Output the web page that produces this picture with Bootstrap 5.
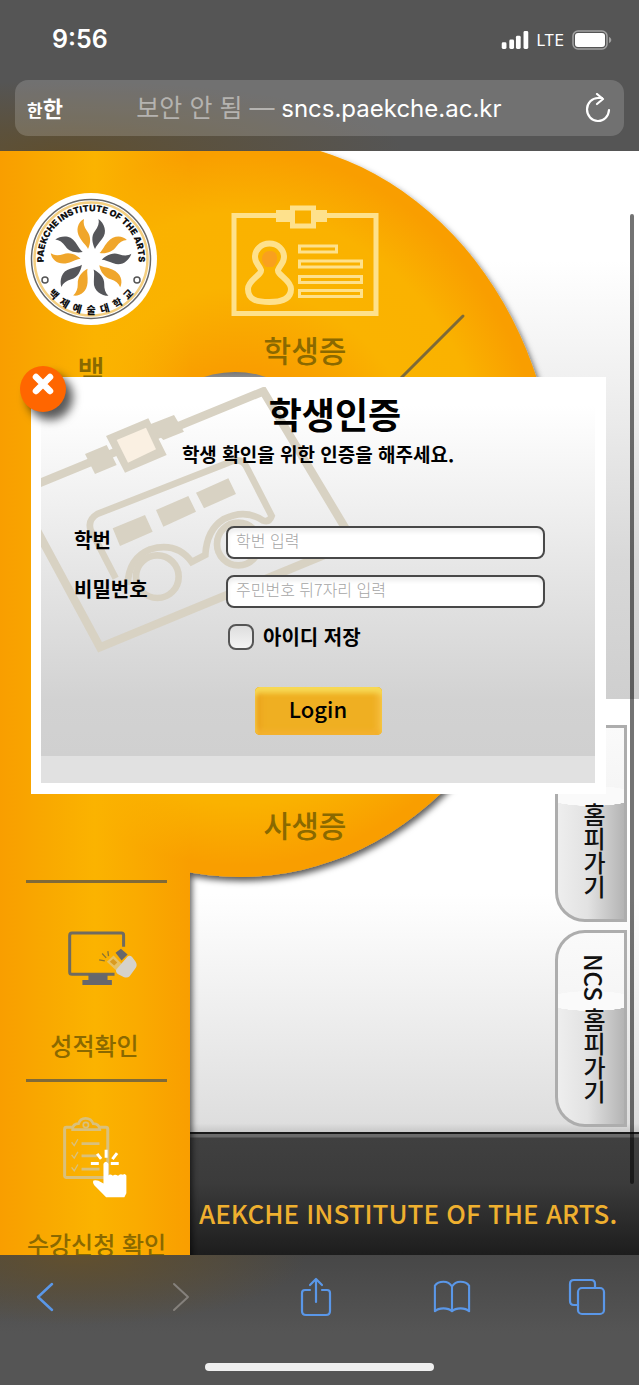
<!DOCTYPE html>
<html lang="ko">
<head>
<meta charset="utf-8">
<meta name="viewport" content="width=device-width, initial-scale=1">
<title>백제예술대학교 학생인증</title>
<link href="https://cdn.jsdelivr.net/npm/bootstrap@5.3.0/dist/css/bootstrap.min.css" rel="stylesheet">
<style>
  body { font-family: "Noto Sans CJK KR", sans-serif; color: #000; background: #555; }
  .latin { font-family: Inter, "Noto Sans CJK KR", sans-serif; }

  /* browser chrome */
  .browser-top { height: 151px; padding: 0 15px; color: #fff;
    background: radial-gradient(ellipse 340px 70px at 10% 100%, #5f4f30, rgba(85,85,85,0)), #555; }
  .status-line { height: 80px; padding: 0 12px 0 37px; }
  .clock { font-size: 25px; font-weight: 600; }
  .network { font-size: 16px; }
  .address { height: 56px; border-radius: 13px; padding: 0 12px; background: rgba(255,255,255,.17); }
  .address-text { font-size: 24px; color: #fff; padding: 2px 9px 0 0; }
  .address-text span { font-size: 25px; color: #b5b3b0; }
  .reader-small { font-size: 17px; }
  .reader-large { font-size: 22px; }
  .plain-btn { border: 0; padding: 0; background: none; color: inherit; line-height: 0; }
  .browser-bottom { height: 130px; color: #5a97e8;
    background: radial-gradient(ellipse 230px 70px at 12% 0, #62502e, rgba(85,85,85,0)), linear-gradient(#474747, #555 60%); }
  .tool-row { height: 83px; padding: 0 32px 0 25px; }
  .tool-row .plain-btn { width: 40px; }
  .home-bar { width: 229px; height: 8px; border-radius: 4px; background: #efefef; margin-top: 25px; }

  /* campus page */
  .stage { min-height: 0; background: #fff; }
  .art { left: 0; top: 0; z-index: 1; pointer-events: none; }
  .side-menu { width: 190px; z-index: 2; padding-top: 42px; }
  .side-list { top: 729px; }
  .menu-link { color: #8a6900; text-decoration: none; font-weight: 500; }
  .big-label { font-size: 30px; line-height: 40px; }
  .side-item { height: 199px; margin: 0 23px 0 26px; border-top: 3px solid #806a38; font-size: 24px; line-height: 32px; white-space: nowrap; }
  .side-icon { height: 146px; padding-top: 4px; }
  .page-main { min-width: 0; }
  .panel-upper { height: 548px; padding: 54px 0 0 41px; background: linear-gradient(#fff 20%, #f0f0f0 42%, #d8d8d8 75%, #cfcfcf); }
  .panel-lower { padding: 26px 12px 5px 41px; background: linear-gradient(#fff 45%, #dedede 98%, #c8c8c8); }
  .above-art { position: relative; z-index: 2; }
  .card-item { width: 148px; }
  .card-item .big-label { margin-top: 12px; }
  .dorm-item { padding-top: 79px; }
  .band { height: 125px; border-top: 2px solid #191919; background: linear-gradient(#6a6a6a 0, #6a6a6a 3px, #404040 4px, #3b3b3b 40%, #1c1c1c); }
  .band-text { font-weight: 500; font-size: 26px; line-height: 40px; color: #efb02f; white-space: nowrap; padding: 59px 0 0 9px; }
  .side-tab { width: 72px; height: 197px; border: 3px solid #adadad; border-radius: 30px 0 0 30px;
    writing-mode: vertical-rl; font-size: 24px; font-weight: 500; line-height: 32px; color: #111; text-decoration: none; padding-left: 6px;
    background: radial-gradient(ellipse 46px 10px at 50% 68px, #fafafa 98%, rgba(250,250,250,0)) no-repeat,
      linear-gradient(#fafafa, #f5f5f5) 0 0 / 100% 68px no-repeat, linear-gradient(90deg, #eee, #e2e2e2 45%, #b4b4b4); }
  .scroll-thumb { right: 5px; top: 63px; width: 4px; height: 970px; border-radius: 2px; background: rgba(0,0,0,.55); z-index: 5; }

  /* login dialog */
  .login-box { top: 226px; left: 31px; right: 33px; z-index: 4; border: 10px solid #fff; border-right-width: 11px; border-bottom-width: 11px; }
  .login-body { height: 369px; background: linear-gradient(#fff 5%, #d2d2d2 85%, #d0d0d0); }
  .login-foot { height: 27px; background: #e1e1e1; }
  .watermark { left: 0; top: 0; }
  .login-title { font-size: 36px; font-weight: 700; line-height: 52px; margin: 0 0 0 34px; }
  .login-sub { font-size: 19px; font-weight: 700; line-height: 30px; }
  .login-form { margin-top: 57px; padding: 0 50px 0 33px; }
  .field-label { width: 152px; font-size: 20px; font-weight: 700; line-height: 28px; }
  .field-input { min-width: 0; height: 33px; border: 2px solid #484848; border-radius: 8px; background: #fff; padding: 0 8px 6px;
    font-size: 16px; box-shadow: inset 0 4px 4px #eee; }
  .field-input::placeholder { color: #a5a5a5; font-weight: 300; opacity: 1; }
  .save-row { margin: 15px 0 0 154px; gap: 9px; }
  .save-check { appearance: none; width: 26px; height: 26px; border: 2px solid #555; border-radius: 8px; background: linear-gradient(#dedede, #f4f4f4); margin: 0; }
  .save-label { font-size: 20px; font-weight: 700; line-height: 28px; }
  .login-btn { width: 127px; height: 48px; margin-top: 36px; border: 0; border-radius: 5px; background: #efaf22; font-size: 22px; font-weight: 500; color: #000;
    padding: 0 0 6px; box-shadow: inset 0 6px 5px #f7d955, inset 0 -5px 5px #f3b12e, inset 6px 0 5px #eba31f, inset -6px 0 5px #f3b838; }
  .close-btn { top: -21px; left: -21px; width: 46px; height: 46px; border: 0; border-radius: 50%; background: #ff6600; padding: 0 0 11px;
    line-height: 0; box-shadow: 7px 8px 10px rgba(0,0,0,.65); z-index: 3; }
</style>
</head>
<body>
<div class="d-flex flex-column vh-100 overflow-hidden">

  <header class="browser-top flex-shrink-0">
    <div class="status-line d-flex align-items-center justify-content-between latin">
      <span class="clock">9:56</span>
      <div class="d-flex align-items-center gap-2">
        <svg width="28" height="18" viewBox="0 0 28 19" fill="#fff"><rect y="12" width="5" height="7" rx="1.5"/><rect x="8" y="9" width="5" height="10" rx="1.5"/><rect x="15" y="5" width="5" height="14" rx="1.5"/><rect x="23" y="0" width="5" height="19" rx="1.5"/></svg>
        <span class="network">LTE</span>
        <svg width="40" height="20" viewBox="0 0 40 20"><rect x="1" y="1" width="34" height="18" rx="5" fill="none" stroke="#a2a2a2" stroke-width="1.5"/><rect x="3" y="3" width="30" height="14" rx="3" fill="#fff"/><path d="M37 7c3 1 3 5 0 6z" fill="#a2a2a2"/></svg>
      </div>
    </div>
    <div class="address d-flex align-items-center justify-content-between">
      <button class="plain-btn fw-bold" aria-label="보기 설정"><span class="reader-small">한</span><span class="reader-large">한</span></button>
      <div class="address-text latin"><span>보안 안 됨 —</span> sncs.paekche.ac.kr</div>
      <button class="plain-btn" aria-label="새로고침">
        <svg width="28" height="30" viewBox="0 0 28 30" fill="none" stroke="#fff" stroke-width="2.2" stroke-linecap="round" stroke-linejoin="round"><path d="M25 17a11 11.500 0 1 1-11-12h4"/><path d="M13 1l6 5-6 5"/></svg>
      </button>
    </div>
  </header>

  <main class="stage position-relative d-flex flex-grow-1 overflow-hidden">
    <svg class="art position-absolute" width="600" height="1110" viewBox="0 151 600 1110" aria-hidden="true">
      <defs>
        <linearGradient id="strip" x1="0" x2="1" y1="0" y2="0"><stop offset="0" stop-color="#f99e00"/><stop offset=".25" stop-color="#f9a900"/><stop offset=".5" stop-color="#fbb300"/><stop offset=".72" stop-color="#faab00"/><stop offset="1" stop-color="#f99e00"/></linearGradient>
        <linearGradient id="stripFade" x1="0" x2="1" y1="0" y2="0"><stop offset="0" stop-color="#f99e00"/><stop offset=".25" stop-color="#f9a900"/><stop offset=".5" stop-color="#fbb300"/><stop offset="1" stop-color="#fab200" stop-opacity="0"/></linearGradient>
        <radialGradient id="ring"><stop offset=".38" stop-color="#f99e00"/><stop offset=".6" stop-color="#fab300"/><stop offset=".8" stop-color="#fab200"/><stop offset=".97" stop-color="#f99e00"/></radialGradient>
        <linearGradient id="hub" x1="0" x2="0" y1="0" y2="1"><stop offset="0" stop-color="#777"/><stop offset=".06" stop-color="#bbb"/></linearGradient>
        <filter id="cast" x="-10%" y="-10%" width="125%" height="125%"><feDropShadow dx="2" dy="4" stdDeviation="3" flood-color="#000" flood-opacity=".65"/></filter>
      </defs>
      <g filter="url(#cast)">
        <rect x="-20" y="130" width="210" height="1160" fill="#f99e00"/>
        <ellipse cx="240" cy="508" rx="317" ry="369" fill="url(#ring)"/>
      </g>
      <rect y="870" width="190" height="400" fill="url(#strip)"/>
      <rect y="140" width="190" height="730" fill="url(#stripFade)"/>
      <ellipse cx="235" cy="507" rx="115" ry="135" fill="url(#hub)"/>
      <path d="M463 316 395 384" stroke="#7d6a38" stroke-width="3" stroke-linecap="round"/>
    </svg>

    <nav class="side-menu position-relative flex-shrink-0" aria-label="메뉴">
      <a href="#" class="menu-link d-block text-center pe-2">
        <svg width="132" height="132" viewBox="-66 -66 132 132">
          <defs>
            <path id="sealTop" d="M-46.500 9A47.400 47.400 0 1 1 46.500 9"/>
            <path id="sealLow" d="M-44 33A55 55 0 0 0 44 33"/>
            <path id="leafDark" d="M7.500-40C13-36 17-27 11-20C8-16 5-13 4-10C1-16 0-23 4-28C7-32 8.500-36 7.500-40Z" fill="#55565a"/>
            <path id="leafGold" d="M-7-40C-13-37-16-29-11-21C-8-16-4-13-3-10C0-16 0-23-4-28C-7-32-8-36-7-40Z" fill="#f0a62b"/>
          </defs>
          <circle r="66" fill="#fff"/>
          <circle r="59.500" fill="none" stroke="#686868" stroke-width="1.500"/>
          <circle r="56.500" fill="none" stroke="#f4cf80" stroke-width="2.500"/>
          <g><use href="#leafDark"/><use href="#leafDark" transform="rotate(72)"/><use href="#leafDark" transform="rotate(144)"/><use href="#leafDark" transform="rotate(216)"/><use href="#leafDark" transform="rotate(288)"/></g>
          <g><use href="#leafGold"/><use href="#leafGold" transform="rotate(72)"/><use href="#leafGold" transform="rotate(144)"/><use href="#leafGold" transform="rotate(216)"/><use href="#leafGold" transform="rotate(288)"/></g>
          <circle cx="-46" cy="21" r="3" fill="none" stroke="#555" stroke-width="1.500"/><circle cx="46" cy="21" r="3" fill="none" stroke="#555" stroke-width="1.500"/>
          <text font-family="Inter, sans-serif" font-weight="900" font-size="9" fill="#111" text-anchor="middle"><textPath href="#sealTop" startOffset="50%">PAEKCHE INSTITUTE OF THE ARTS</textPath></text>
          <text font-weight="900" font-size="10" fill="#111" text-anchor="middle"><textPath href="#sealLow" startOffset="50%">백 &#160;제 &#160;예 &#160;술 &#160;대 &#160;학 &#160;교</textPath></text>
        </svg>
        <span class="d-block big-label mt-4">백</span>
      </a>
      <div class="side-list position-absolute start-0 end-0">
        <a href="#" class="menu-link side-item d-flex flex-column align-items-center">
          <span class="side-icon d-flex align-items-center ps-2">
            <svg class="ms-1" width="72" height="57" viewBox="200 95 215 170">
              <path d="M369 145V110Q369 104 363 104H215Q208 104 208 112V220Q208 227 215 227H342" fill="none" stroke="#6f6b60" stroke-width="9"/>
              <path d="M264 228h57v16h13v15h-88v-15h18z" fill="#66676c"/>
              <g stroke="#8b7430" stroke-width="4"><path d="M296 184l17 3M305 165l12 13M322 158l2 15"/></g>
              <path d="M345 163l16-12 20 17-18 18z" fill="#66676c"/>
              <path d="M319 190l20-19 24 25-17 19z" fill="#e6c164"/><path d="M328 190l10-9 12 11-9 9z" fill="#d99b20"/>
              <path d="M347 213l34-39q7-5 14 2l10 14q6 10 0 18l-18 25q-7 6-18 2l-16-8q-9-6-6-14z" fill="#d5d2cb"/>
            </svg>
          </span>
          <span class="pe-1">성적확인</span>
        </a>
        <a href="#" class="menu-link side-item d-flex flex-column align-items-center">
          <span class="side-icon d-flex align-items-center pe-1">
            <svg width="67" height="83" viewBox="185 648 200 250">
              <rect x="195" y="682" width="130" height="151" rx="6" fill="none" stroke="#d9c07c" stroke-width="9"/>
              <path d="M219 689q0-18 18-18 5-16 21-16 17 0 23 16 18 0 20 18z" fill="#f6ac05" stroke="#d9c07c" stroke-width="8"/><circle cx="259" cy="675" r="8" fill="none" stroke="#d9c07c" stroke-width="5"/>
              <path d="M216 727l8 10 11-19M216 765l8 10 11-19M216 803l8 10 11-19" fill="none" stroke="#d9c07c" stroke-width="4"/>
              <path d="M246 731h54M246 768h46M246 808h54" stroke="#d9c07c" stroke-width="8"/>
              <path d="M320 750v24M293 762l12 15M353 760l-14 18M274 791h24M334 791h24" stroke="#fff" stroke-width="9"/>
              <path d="M312 792q7-12 15 0v35q4-6 13 0v2q5-8 16-1 6-8 15-3 5-6 10 2v54l-6 12h-55l-35-36q-7-9-3-15 8-2 15 1l15 8z" fill="#fff"/>
            </svg>
          </span>
          <span>수강신청 확인</span>
        </a>
      </div>
    </nav>

    <section class="page-main d-flex flex-column flex-grow-1">
      <div class="panel-upper flex-shrink-0">
        <a href="#" class="menu-link above-art card-item d-block text-center">
          <svg class="d-block" width="148" height="112" viewBox="0 0 148 112" fill="none" stroke="#fee18c">
            <rect x="3" y="10.500" width="142" height="98" stroke-width="5"/>
            <path d="M45 5h51v12H45z" fill="#fee18c" stroke="none"/>
            <rect x="61.500" y="3" width="21" height="18" fill="#f9b000" stroke-width="5"/>
            <path d="M38.500 38.500C30 38.500 24 45 24 52C24 58 28 60 30 65C31 70 17 75 17 84C17 95 26 97 38.500 97C51 97 60 94 60 84C60 75 46 70 47 65C49 60 53 58 53 52C53 45 47 38.500 38.500 38.500Z" stroke-width="6"/>
            <path d="M31 53q1-7 8-7t7 7q0 6-4 9h-7q-4-3-4-9z" fill="#f9a01e" stroke="none"/>
            <path d="M68.500 41h37v6h-37zM68.500 56h62v6h-62zM68.500 71.500h62v6h-62zM68.500 85.500h62v6h-62z" stroke-width="3"/>
          </svg>
          <span class="d-block big-label">학생증</span>
        </a>
      </div>
      <div class="panel-lower d-flex flex-grow-1 justify-content-between">
        <a href="#" class="menu-link above-art card-item dorm-item big-label text-center">사생증</a>
        <div class="d-flex flex-column gap-2 above-art">
          <a href="#" class="side-tab d-flex align-items-center justify-content-center">학교 홈피가기</a>
          <a href="#" class="side-tab d-flex align-items-center justify-content-center">NCS 홈피가기</a>
        </div>
      </div>
      <footer class="band flex-shrink-0"><div class="band-text">AEKCHE INSTITUTE OF THE ARTS.</div></footer>
    </section>

    <div class="login-box position-absolute" role="dialog" aria-labelledby="loginTitle">
      <button class="close-btn position-absolute" aria-label="닫기">
        <svg width="24" height="24" viewBox="0 0 24 24" stroke="#fff" stroke-width="6.500" stroke-linecap="round"><path d="M5 5l14 14M19 5L5 19"/></svg>
      </button>
      <div class="login-body position-relative">
        <svg class="watermark position-absolute" width="320" height="280" viewBox="123 81 960 840" fill="none" stroke="#d8d2c3" stroke-width="25" aria-hidden="true">
          <path d="M110 373L790 94 1062 548 300 862 110 510"/>
          <path d="M318 228l127-53 55 110-125 53zM255 282l65-27 30 60-65 27zM445 195l77-30 30 50-62 25z" fill="#d8d2c3" stroke="none"/>
          <path d="M350 240l88-37 30 65-84 40z" fill="#faf0e2" stroke="none"/>
          <path d="M347 655L272 510Q262 480 292 462L695 304Q725 294 738 318L815 468Q808 488 790 482Q735 445 670 478Q620 510 616 585L575 606Q530 545 450 568Q385 595 383 675" stroke-width="20"/>
          <path d="M338 505l97-40 23 50-98 43zM468 450l97-42 23 47-98 45zM588 398l97-43 23 47-96 43z" fill="#d8d2c3" stroke="none"/>
          <circle cx="472" cy="650" r="64" stroke-width="20"/><circle cx="715" cy="552" r="64" stroke-width="20"/>
        </svg>
        <div class="position-relative">
          <h1 class="login-title text-center" id="loginTitle">학생인증</h1>
          <p class="login-sub text-center mb-0">학생 확인을 위한 인증을 해주세요.</p>
          <form class="login-form" id="loginForm">
            <div class="d-flex mb-3">
              <label class="field-label flex-shrink-0" for="studentNo">학번</label>
              <input class="field-input flex-grow-1" id="studentNo" type="text" placeholder="학번 입력">
            </div>
            <div class="d-flex">
              <label class="field-label flex-shrink-0" for="pin">비밀번호</label>
              <input class="field-input flex-grow-1" id="pin" type="password" placeholder="주민번호 뒤7자리 입력">
            </div>
            <div class="save-row d-flex align-items-center">
              <input class="save-check" id="saveId" type="checkbox">
              <label class="save-label" for="saveId">아이디 저장</label>
            </div>
          </form>
          <div class="text-center"><button class="login-btn" type="submit" form="loginForm">Login</button></div>
        </div>
      </div>
      <div class="login-foot"></div>
    </div>
    <div class="scroll-thumb position-absolute"></div>
  </main>

  <footer class="browser-bottom flex-shrink-0">
    <div class="tool-row d-flex align-items-center justify-content-between">
      <button class="plain-btn" aria-label="뒤로"><svg width="26" height="32" viewBox="0 0 26 32" fill="none" stroke="currentColor" stroke-width="2.500" stroke-linecap="round" stroke-linejoin="round"><path d="M20 3L6 16l14 13"/></svg></button>
      <button class="plain-btn" aria-label="앞으로"><svg width="26" height="32" viewBox="0 0 26 32" fill="none" stroke="#85817c" stroke-width="2" stroke-linecap="round" stroke-linejoin="round"><path d="M6 3l14 13L6 29"/></svg></button>
      <button class="plain-btn" aria-label="공유"><svg width="32" height="40" viewBox="0 0 32 40" fill="none" stroke="currentColor" stroke-width="2.200" stroke-linecap="round" stroke-linejoin="round"><path d="M10 13H5q-3 0-3 3v18q0 4 4 4h20q4 0 4-4V16q0-3-3-3h-5M16 25V2M10 8l6-6 6 6"/></svg></button>
      <button class="plain-btn" aria-label="책갈피"><svg width="38" height="36" viewBox="0 0 40 36" fill="none" stroke="currentColor" stroke-width="2.200" stroke-linejoin="round"><path d="M20 7Q17 2 11 2T2 6V33Q5 30 11 30T20 33Q23 30 29 30T38 33V6Q35 2 29 2T20 7V33"/></svg></button>
      <button class="plain-btn" aria-label="탭"><svg width="38" height="38" viewBox="0 0 38 38" fill="none" stroke="currentColor" stroke-width="2.200"><path d="M10 27H6q-4 0-4-4V6q0-4 4-4h17q4 0 4 4v4"/><rect x="10" y="10" width="26" height="26" rx="4"/></svg></button>
    </div>
    <div class="home-bar mx-auto"></div>
  </footer>
</div>
<script src="https://cdn.jsdelivr.net/npm/bootstrap@5.3.0/dist/js/bootstrap.bundle.min.js"></script>
</body>
</html>
